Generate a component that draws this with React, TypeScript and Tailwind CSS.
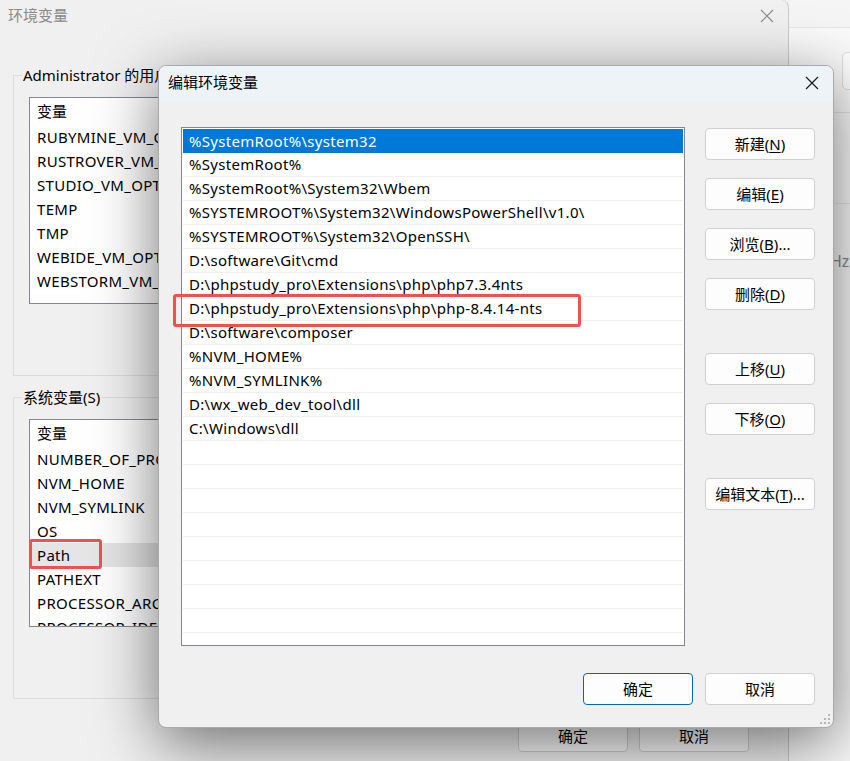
import React from "react";

const FONT = { fontFamily: '"Noto Sans", "Noto Sans CJK SC", sans-serif' };

const userVars = [
  "RUBYMINE_VM_OPTIONS",
  "RUSTROVER_VM_OPTIONS",
  "STUDIO_VM_OPTIONS",
  "TEMP",
  "TMP",
  "WEBIDE_VM_OPTIONS",
  "WEBSTORM_VM_OPTIONS",
];

const sysVars = [
  "NUMBER_OF_PROCESSORS",
  "NVM_HOME",
  "NVM_SYMLINK",
  "OS",
  "Path",
  "PATHEXT",
  "PROCESSOR_ARCHITECTURE",
  "PROCESSOR_IDENTIFIER",
];

const paths = [
  "%SystemRoot%\\system32",
  "%SystemRoot%",
  "%SystemRoot%\\System32\\Wbem",
  "%SYSTEMROOT%\\System32\\WindowsPowerShell\\v1.0\\",
  "%SYSTEMROOT%\\System32\\OpenSSH\\",
  "D:\\software\\Git\\cmd",
  "D:\\phpstudy_pro\\Extensions\\php\\php7.3.4nts",
  "D:\\phpstudy_pro\\Extensions\\php\\php-8.4.14-nts",
  "D:\\software\\composer",
  "%NVM_HOME%",
  "%NVM_SYMLINK%",
  "D:\\wx_web_dev_tool\\dll",
  "C:\\Windows\\dll",
];

function CloseIcon({ color }: { color: string }) {
  return (
    <svg width="16" height="16" viewBox="0 0 16 16">
      <path d="M2 2 L14 14 M14 2 L2 14" stroke={color} strokeWidth="1.2" fill="none" />
    </svg>
  );
}

function WinButton({ label, mnemonic, suffix = "", primary = false }: { label: string; mnemonic?: string; suffix?: string; primary?: boolean }) {
  return (
    <button
      className={`h-[32px] w-[110px] rounded-[4px] border text-[15px] text-black flex items-center justify-center ${
        primary ? "border-[#0067c0] bg-[#fdfdfd]" : "border-[#d0d0d0] bg-[#fdfdfd]"
      }`}
    >
      {label}
      {mnemonic && (
        <>
          (<span className="underline underline-offset-2">{mnemonic}</span>){suffix}
        </>
      )}
    </button>
  );
}

function VarList({ items, selected, heightClass }: { items: string[]; selected?: string; heightClass: string }) {
  return (
    <div className={`relative w-[740px] ${heightClass} border border-[#828790] bg-white`}>
      <div className="h-full overflow-hidden">
        <div className="h-[27px] flex items-center pl-[7px] text-[15px]">变量</div>
        {items.map((v) => (
          <div
            key={v}
            className={`h-[24px] flex items-center pl-[7px] text-[15px] tracking-[0.3px] ${v === selected ? "bg-[#e5e5e5]" : ""}`}
          >
            {v}
          </div>
        ))}
      </div>
    </div>
  );
}

function BackgroundWindow() {
  return (
    <div className="absolute left-0 top-0 w-[789px] h-[770px] bg-[#f0f0f0] rounded-tr-[8px] border-r border-[#c9c9c9] flex flex-col">
      <div className="h-[31px] flex items-center justify-between pl-[8px] pr-[13px]">
        <span className="text-[15px] text-[#8a8a8a]">环境变量</span>
        <CloseIcon color="#8a8a8a" />
      </div>
      <div className="flex flex-col pl-[13px] pt-[34px]">
        <fieldset className="h-[311px] w-[763px] border border-[#dcdcdc] pl-[15px] pt-[12px]">
          <legend className="-ml-[7px] px-[1px] text-[15px] leading-[20px]">Administrator 的用户变量(U)</legend>
          <VarList items={userVars} heightClass="h-[207px]" />
        </fieldset>
        <fieldset className="mt-[11px] h-[312px] w-[763px] border border-[#dcdcdc] pl-[15px] pt-[12px]">
          <legend className="-ml-[7px] px-[1px] text-[15px] leading-[20px]">系统变量(S)</legend>
          <div className="relative">
            <VarList items={sysVars} selected="Path" heightClass="h-[208px]" />
            <div className="absolute left-0 top-[120px] w-[73px] h-[30px] border-[3px] border-[#f0504f] rounded-[3px]" />
          </div>
        </fieldset>
        <div className="mt-[21px] ml-[505px] flex gap-[11px]">
          <WinButton label="确定" />
          <WinButton label="取消" />
        </div>
      </div>
    </div>
  );
}

function RightWindow() {
  return (
    <div className="absolute left-[789px] top-0 w-[70px] h-[761px] bg-[#fafafa] flex flex-col">
      <div className="h-[28px] border-b border-[#e5e5e5] bg-[#f5f5f5]" />
      <div className="mt-[24px] ml-[53px] h-[38px] w-[30px] rounded-[5px] border border-[#dedede] bg-white" />
      <div className="mt-[22px] border-b border-[#e5e5e5]" />
      <div className="mt-[90px] border-b border-[#e8e8e8]" />
      <div className="mt-[45px] ml-[41px] text-[16px] text-[#8a8a8a]">Hz</div>
    </div>
  );
}

function EditDialog() {
  const rows = Array.from({ length: 22 }, (_, i) => paths[i] ?? "");
  return (
    <div className="absolute left-[158px] top-[65px] w-[676px] h-[663px] rounded-[8px] border border-[#a9a9a9] bg-[#f0f0f0] shadow-[0_16px_64px_rgba(0,0,0,0.55)] overflow-hidden flex flex-col">
      <div className="h-[36px] shrink-0 bg-[#eef3f8] flex items-center justify-between pl-[9px] pr-[13px] pb-[3px]">
        <span className="text-[15px] text-black">编辑环境变量</span>
        <CloseIcon color="#1a1a1a" />
      </div>
      <div className="flex pl-[22px] pt-[25px] pr-[18px]">
        <div className="relative w-[504px] h-[519px] border border-[#828790] bg-white">
          <div className="h-full overflow-hidden p-[1px]">
            {rows.map((p, i) => (
              <div
                key={i}
                className={`h-[24px] flex items-center pl-[6px] text-[15px] tracking-[0.3px] whitespace-nowrap ${
                  i === 0 ? "bg-[#0078d7] text-white" : "border-b border-[#f0f0f0] text-black"
                }`}
              >
                {p}
              </div>
            ))}
          </div>
          <div className="absolute left-[-9px] top-[166px] w-[408px] h-[33px] border-[3px] border-[#f0504f] rounded-[3px]" />
        </div>
        <div className="ml-auto flex flex-col">
          <div className="mt-[1px]">
            <WinButton label="新建" mnemonic="N" />
          </div>
          <div className="mt-[18px]">
            <WinButton label="编辑" mnemonic="E" />
          </div>
          <div className="mt-[18px]">
            <WinButton label="浏览" mnemonic="B" suffix="..." />
          </div>
          <div className="mt-[18px]">
            <WinButton label="删除" mnemonic="D" />
          </div>
          <div className="mt-[43px]">
            <WinButton label="上移" mnemonic="U" />
          </div>
          <div className="mt-[18px]">
            <WinButton label="下移" mnemonic="O" />
          </div>
          <div className="mt-[43px]">
            <WinButton label="编辑文本" mnemonic="T" suffix="..." />
          </div>
        </div>
      </div>
      <div className="flex justify-end gap-[12px] pr-[18px] mt-[27px]">
        <WinButton label="确定" primary />
        <WinButton label="取消" />
      </div>
      <svg className="absolute right-[3px] bottom-[3px]" width="10" height="10" viewBox="0 0 10 10">
        <rect x="8" y="0" width="2" height="2" fill="#b5b5b5" />
        <rect x="4" y="4" width="2" height="2" fill="#b5b5b5" />
        <rect x="8" y="4" width="2" height="2" fill="#b5b5b5" />
        <rect x="0" y="8" width="2" height="2" fill="#b5b5b5" />
        <rect x="4" y="8" width="2" height="2" fill="#b5b5b5" />
        <rect x="8" y="8" width="2" height="2" fill="#b5b5b5" />
      </svg>
    </div>
  );
}

export default function App() {
  return (
    <div className="relative w-[850px] h-[761px] overflow-hidden bg-[#f0f0f0] text-black" style={FONT}>
      <RightWindow />
      <BackgroundWindow />
      <EditDialog />
    </div>
  );
}
